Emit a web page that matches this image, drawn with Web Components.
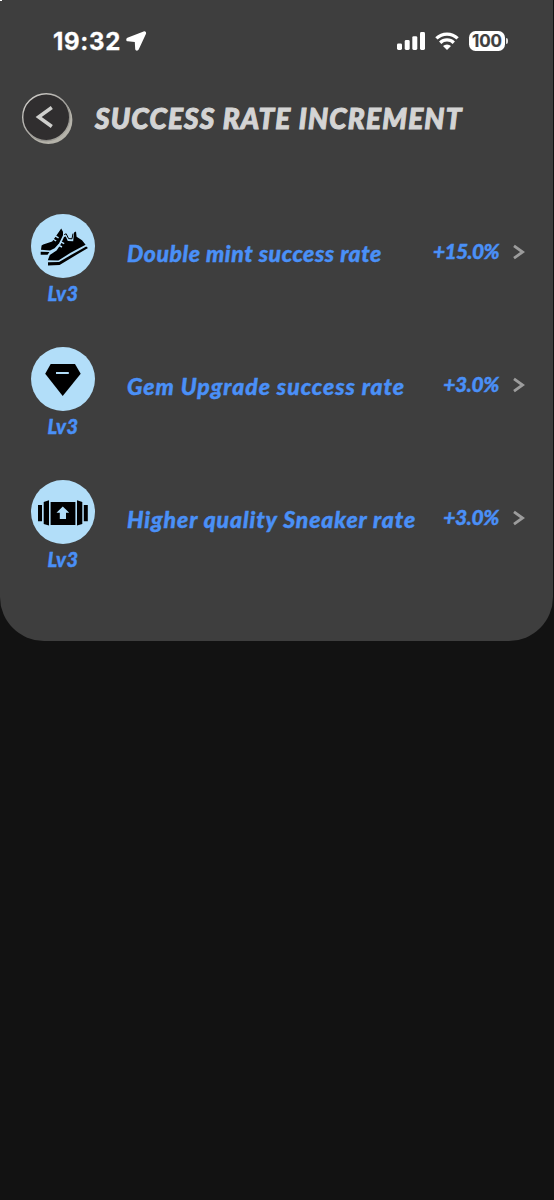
<!DOCTYPE html>
<html lang="en">
<head>
<meta charset="utf-8">
<meta name="viewport" content="width=device-width, initial-scale=1">
<title>Success Rate Increment</title>
<style>
  body {
    margin: 0;
    background: #121212;
    font-family: Lato, sans-serif;
  }
</style>
</head>
<body>
<rate-screen>
  <status-bar slot="status" time="19:32" battery="100"></status-bar>
  <page-header slot="header">SUCCESS RATE INCREMENT</page-header>
  <rate-row icon="sneakers" level="Lv3" value="+15.0%" style="--name-spacing: 0.55px; --value-spacing: -0.65px">Double mint success rate</rate-row>
  <rate-row icon="gem" level="Lv3" value="+3.0%" style="--name-spacing: 0.96px">Gem Upgrade success rate</rate-row>
  <rate-row icon="box" level="Lv3" value="+3.0%" style="--name-spacing: 0.88px">Higher quality Sneaker rate</rate-row>
</rate-screen>

<script>
class RateScreen extends HTMLElement {
  constructor() {
    super();
    this.attachShadow({ mode: 'open' }).innerHTML = `
      <style>
        :host {
          display: block;
          min-height: 1200px;
          background: #121212;
        }
        .panel {
          box-sizing: border-box;
          width: 553px;
          height: 641px;
          border-radius: 0 0 44px 44px;
          background: linear-gradient(#fff, #fff) 0 0 / 2px 1px no-repeat, #3e3e3e;
        }
        .rows {
          display: grid;
          grid-auto-rows: 133px;
          padding-top: 63px;
        }
      </style>
      <div class="panel">
        <slot name="status"></slot>
        <slot name="header"></slot>
        <div class="rows"><slot></slot></div>
      </div>
    `;
  }
}

class StatusBar extends HTMLElement {
  connectedCallback() {
    this.attachShadow({ mode: 'open' }).innerHTML = `
      <style>
        :host {
          display: flex;
          align-items: center;
          box-sizing: border-box;
          height: 82px;
          padding: 0 45px 0 53px;
          color: #fff;
          font-family: Inter, sans-serif;
          font-weight: 700;
        }
        svg { display: block; fill: currentColor; }
        .time { padding-top: 1px; font-size: 24px; line-height: 30px; letter-spacing: 0.7px; width: 73px; white-space: nowrap; -webkit-text-stroke: 0.3px; }
        .signal { margin-left: auto; }
        .wifi { margin: 0 10px; }
        .battery {
          width: 36px;
          height: 20px;
          border-radius: 6.5px;
          background: #fff;
          color: #3e3e3e;
          font-size: 17px;
          line-height: 20px;
          letter-spacing: -0.1px;
          text-align: center;
          -webkit-text-stroke: 0.2px;
        }
        .nub {
          width: 2px;
          height: 6px;
          margin-left: 1px;
          border-radius: 0 2px 2px 0;
          background: #ddd;
        }
      </style>
      <span class="time">${this.getAttribute('time')}</span>
      <svg width="21" height="20" viewBox="0 0 21 20"><path d="M17.6.5 1.4 6.8C-.4 7.8 0 10.3 1.8 10.3L8.8 11 9.2 18C9.4 20 11.9 20.2 12.7 18.5L19.9 2.9C20.6 1.3 19.2-.2 17.6.5Z"/></svg>
      <svg class="signal" width="28" height="18" viewBox="0 0 28 18">
        <rect x="0" y="11.4" width="5" height="6.6" rx="1.4"/>
        <rect x="7.7" y="8" width="5" height="10" rx="1.4"/>
        <rect x="15.3" y="4.2" width="5" height="13.8" rx="1.4"/>
        <rect x="23" y="0" width="5" height="18" rx="1.4"/>
      </svg>
      <svg class="wifi" width="24" height="18" viewBox="0 0 24 18">
        <path d="M1.4 6.4a15.2 15.2 0 0 1 21.2 0M5.2 10.7a9.8 9.8 0 0 1 13.6 0" fill="none" stroke="#fff" stroke-width="3.3"/>
        <path d="M12 18 8 14a5.8 5.8 0 0 1 8 0Z"/>
      </svg>
      <span class="battery">${this.getAttribute('battery')}</span>
      <span class="nub"></span>
    `;
  }
}

class PageHeader extends HTMLElement {
  constructor() {
    super();
    this.attachShadow({ mode: 'open' }).innerHTML = `
      <style>
        :host {
          display: flex;
          align-items: center;
          box-sizing: border-box;
          height: 69px;
          padding: 4px 0 0 22px;
        }
        button {
          width: 51px;
          height: 52px;
          margin: 0 22px 0 0;
          padding: 0;
          border: 0;
          background: none;
        }
        svg { display: block; }
        h1 {
          margin: -2px 0 0;
          color: #d4d4d4;
          font-size: 28px;
          font-style: italic;
          font-weight: 900;
          line-height: 36px;
          letter-spacing: 1.18px;
          white-space: nowrap;
          -webkit-text-stroke: 1px;
        }
      </style>
      <button aria-label="Back">
        <svg width="51" height="52" viewBox="0 0 51 52">
          <defs>
            <linearGradient id="rim" x1="0" y1="0" x2="1" y2="1">
              <stop offset="0" stop-color="#d8d6d2"/>
              <stop offset=".75" stop-color="#8f8d88"/>
              <stop offset="1" stop-color="#c6c4ba"/>
            </linearGradient>
          </defs>
          <circle cx="26.4" cy="27" r="24" fill="#b5b3aa"/>
          <circle cx="24.2" cy="24.2" r="23.5" fill="#302e2f" stroke="url(#rim)" stroke-width="1.4"/>
          <path d="M29.8 14.5 16.6 24 29.8 33.5" fill="none" stroke="#cfcfcd" stroke-width="3.5"/>
        </svg>
      </button>
      <h1><slot></slot></h1>
    `;
  }
}

const icons = {
  sneakers: `
    <path d="M10 35.8 10.6 31.6 12.2 30.6 21.2 27.4 25.4 21.4 30.2 14.4 32 17.8 32 21.2 28 29.6 23.6 34.2 19 36.4Z"/>
    <path d="M9.7 37.8 18.4 38 16.6 40.8 9.7 40.8Z"/>
    <path d="M16.8 46.2 18.8 41 25.6 36.4 29.6 30.4 33 23 34.8 22.6 36.8 27 42.2 27.2 43 18.6 45 17.4 45.6 22.8 51 26.2 54.6 30.8 39.6 38.8 27.4 46.4Z"/>
    <path d="M17 48.2 28 48 40 41 55.2 32.4 57 34 41 43.4 28.6 51 17 51.6Z"/>
    <path d="M33.2 20.6 35.2 19.8 37.6 24.6 41 24.8 42 19.6" fill="none" stroke="#000" stroke-width="1"/>
    <path d="M21.8 25 25.2 27M24.2 21.8 27.6 23.8M27 31 31 33M29.2 27.6 33.2 29.6" stroke="#b2def9" stroke-width="1.4"/>
  `,
  gem: `
    <path d="M19.7 17H44L49.7 26.8 31.7 49 14.2 26.8Z"/>
    <path d="M25 25H37.8V27H25Z" fill="#b2def9"/>
  `,
  box: `
    <path d="M7 25h4v16.2H7ZM52.8 25h4v16.2h-4ZM12.7 22 18 20.3V45.6L12.7 44ZM46 20.3 51.3 22V44L46 45.6ZM19.6 22H44.4V45H19.6Z"/>
    <path d="M31.8 26.4 38.2 32.8H35V39H28.8V32.8H25.5Z" fill="#b2def9"/>
  `
};

class RateRow extends HTMLElement {
  connectedCallback() {
    this.attachShadow({ mode: 'open' }).innerHTML = `
      <style>
        :host {
          display: flex;
          padding-left: 31px;
          color: #4a90f7;
          font-style: italic;
          font-weight: 900;
          white-space: nowrap;
          -webkit-text-stroke: 0.4px;
        }
        .badge {
          display: flex;
          flex-direction: column;
          align-items: center;
          width: 64px;
        }
        .badge svg {
          display: block;
          border-radius: 50%;
          background: #b2def9;
        }
        .level {
          margin-top: 3px;
          font-size: 20px;
          line-height: 24px;
          letter-spacing: 0.5px;
        }
        .line {
          display: flex;
          flex: 1;
          align-items: center;
          height: 76px;
          padding: 0 28px 0 32px;
        }
        .name {
          flex: 1;
          padding-top: 1px;
          font-size: 23px;
          letter-spacing: var(--name-spacing);
        }
        .value {
          margin-top: -3px;
          font-size: 21px;
          letter-spacing: var(--value-spacing, -0.4px);
        }
        .arrow { display: block; margin-left: 14px; }
      </style>
      <div class="badge">
        <svg width="64" height="64" viewBox="0 0 64 64">${icons[this.getAttribute('icon')]}</svg>
        <span class="level">${this.getAttribute('level')}</span>
      </div>
      <div class="line">
        <span class="name"><slot></slot></span>
        <span class="value">${this.getAttribute('value')}</span>
        <svg class="arrow" width="12" height="16" viewBox="0 0 12 16"><path d="M1 1.8 9.6 8 1 14.2" fill="none" stroke="#9c9c9c" stroke-width="2.8"/></svg>
      </div>
    `;
  }
}

customElements.define('rate-screen', RateScreen);
customElements.define('status-bar', StatusBar);
customElements.define('page-header', PageHeader);
customElements.define('rate-row', RateRow);
</script>
</body>
</html>
